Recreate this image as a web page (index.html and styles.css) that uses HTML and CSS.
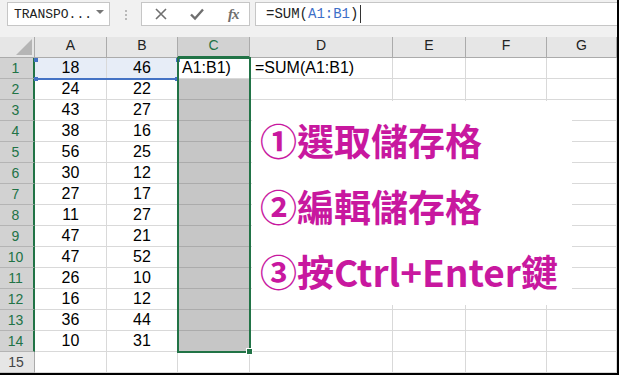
FILE: index.html
```html
<!DOCTYPE html>
<html lang="zh-Hant">
<head>
  <meta charset="UTF-8" />
  <title>Ctrl+Enter</title>
  <link rel="stylesheet" href="styles.css">
</head>
<body>
  <div class="app">
    <div class="fbar">
      <div class="namebox">
        <span class="name">TRANSPO...</span>
        <span class="drop"></span>
      </div>
      <div class="grip"><i></i><i></i><i></i></div>
      <div class="btns">
        <svg class="ico" width="14" height="14" viewBox="0 0 14 14"><path d="M2 2L12 12M12 2L2 12" stroke="#6f6f6f" stroke-width="1.6" fill="none"/></svg>
        <svg class="ico" width="16" height="14" viewBox="0 0 16 14"><path d="M2 7.5L6 11.5L14 2.5" stroke="#6f6f6f" stroke-width="2.4" fill="none"/></svg>
        <span class="fx">fx</span>
      </div>
      <div class="formula">=SUM(<span class="ref">A1:B1</span>)<span class="caret"></span></div>
    </div>

    <div class="sheet">
      <div class="row hdr">
        <div class="rh corner"><span class="tri"></span></div>
        <div class="ca">A</div>
        <div class="cb">B</div>
        <div class="cc on">C</div>
        <div class="cd">D</div>
        <div class="ce">E</div>
        <div class="cf">F</div>
        <div class="cg">G</div>
      </div>
      <div class="row">
        <div class="rh on">1</div>
        <div class="ca num refcell">18</div>
        <div class="cb num refcell">46</div>
        <div class="cc act">A1:B1)</div>
        <div class="cd txt">=SUM(A1:B1)</div>
        <div class="ce"></div><div class="cf"></div><div class="cg"></div>
      </div>
      <div class="row">
        <div class="rh on">2</div><div class="ca num">24</div><div class="cb num">22</div>
        <div class="cc shade"></div><div class="cd"></div><div class="ce"></div><div class="cf"></div><div class="cg"></div>
      </div>
      <div class="row">
        <div class="rh on">3</div><div class="ca num">43</div><div class="cb num">27</div>
        <div class="cc shade"></div><div class="cd"></div><div class="ce"></div><div class="cf"></div><div class="cg"></div>
      </div>
      <div class="row">
        <div class="rh on">4</div><div class="ca num">38</div><div class="cb num">16</div>
        <div class="cc shade"></div><div class="cd"></div><div class="ce"></div><div class="cf"></div><div class="cg"></div>
      </div>
      <div class="row">
        <div class="rh on">5</div><div class="ca num">56</div><div class="cb num">25</div>
        <div class="cc shade"></div><div class="cd"></div><div class="ce"></div><div class="cf"></div><div class="cg"></div>
      </div>
      <div class="row">
        <div class="rh on">6</div><div class="ca num">30</div><div class="cb num">12</div>
        <div class="cc shade"></div><div class="cd"></div><div class="ce"></div><div class="cf"></div><div class="cg"></div>
      </div>
      <div class="row">
        <div class="rh on">7</div><div class="ca num">27</div><div class="cb num">17</div>
        <div class="cc shade"></div><div class="cd"></div><div class="ce"></div><div class="cf"></div><div class="cg"></div>
      </div>
      <div class="row">
        <div class="rh on">8</div><div class="ca num">11</div><div class="cb num">27</div>
        <div class="cc shade"></div><div class="cd"></div><div class="ce"></div><div class="cf"></div><div class="cg"></div>
      </div>
      <div class="row">
        <div class="rh on">9</div><div class="ca num">47</div><div class="cb num">21</div>
        <div class="cc shade"></div><div class="cd"></div><div class="ce"></div><div class="cf"></div><div class="cg"></div>
      </div>
      <div class="row">
        <div class="rh on">10</div><div class="ca num">47</div><div class="cb num">52</div>
        <div class="cc shade"></div><div class="cd"></div><div class="ce"></div><div class="cf"></div><div class="cg"></div>
      </div>
      <div class="row">
        <div class="rh on">11</div><div class="ca num">26</div><div class="cb num">10</div>
        <div class="cc shade"></div><div class="cd"></div><div class="ce"></div><div class="cf"></div><div class="cg"></div>
      </div>
      <div class="row">
        <div class="rh on">12</div><div class="ca num">16</div><div class="cb num">12</div>
        <div class="cc shade"></div><div class="cd"></div><div class="ce"></div><div class="cf"></div><div class="cg"></div>
      </div>
      <div class="row">
        <div class="rh on">13</div><div class="ca num">36</div><div class="cb num">44</div>
        <div class="cc shade"></div><div class="cd"></div><div class="ce"></div><div class="cf"></div><div class="cg"></div>
      </div>
      <div class="row">
        <div class="rh on">14</div><div class="ca num">10</div><div class="cb num">31</div>
        <div class="cc shade"></div><div class="cd"></div><div class="ce"></div><div class="cf"></div><div class="cg"></div>
      </div>
      <div class="row">
        <div class="rh">15</div><div class="ca"></div><div class="cb"></div>
        <div class="cc"></div><div class="cd"></div><div class="ce"></div><div class="cf"></div><div class="cg"></div>
      </div>
    </div>

    <!-- overlays -->
    <div class="refline"></div>
    <span class="dot d1"></span>
    <span class="dot d2"></span>
    <span class="dot d3"></span>
    <span class="dot d4"></span>
    <div class="sel"></div>
    <div class="handle"></div>

    <div class="note">
      <p>①選取儲存格</p>
      <p>②編輯儲存格</p>
      <p>③按Ctrl+Enter鍵</p>
    </div>
  </div>
</body>
</html>
```

FILE: styles.css
```css
html, body, div, p {
  margin: 0;
  padding: 0;
}
body {
  background: #fff;
  font-family: "Liberation Sans", Arial, sans-serif;
}

.app {
  position: relative;
  width: 617px;
  height: 373px;
  border-right: 2px solid #000;
  border-bottom: 2px solid #000;
  overflow: hidden;
}

/* formula bar */
.fbar {
  height: 37px;
  background: #f1f1f1;
  display: flex;
  align-items: flex-start;
  padding-top: 2px;
  box-sizing: border-box;
}
.namebox {
  margin-left: 7px;
  width: 103px;
  height: 24px;
  box-sizing: border-box;
  border: 1px solid #c6c6c6;
  background: #fff;
  display: flex;
  align-items: center;
  padding-left: 6px;
  font-family: "Liberation Mono", monospace;
  font-size: 13px;
  color: #222;
}
.namebox .name {
  flex: 1;
}
.namebox .drop {
  width: 0;
  height: 0;
  border-left: 4px solid transparent;
  border-right: 4px solid transparent;
  border-top: 4px solid #777;
  margin-right: 5px;
  margin-top: -4px;
}
.grip {
  width: 31px;
  display: flex;
  flex-direction: column;
  align-items: center;
  gap: 2px;
  padding-top: 8px;
}
.grip i {
  display: block;
  width: 2px;
  height: 2px;
  background: #b9b9b9;
}
.btns {
  width: 109px;
  height: 24px;
  box-sizing: border-box;
  border: 1px solid #c6c6c6;
  background: #fff;
  display: flex;
  align-items: center;
  padding-left: 12px;
  gap: 21px;
}
.btns .fx {
  font-family: "Liberation Serif", serif;
  font-style: italic;
  font-weight: bold;
  font-size: 15px;
  color: #6f6f6f;
  margin-left: 2px;
  letter-spacing: -1px;
}
.formula {
  margin-left: 5px;
  flex: 1;
  height: 24px;
  box-sizing: border-box;
  border: 1px solid #c6c6c6;
  border-right: 0;
  background: #fff;
  padding-left: 10px;
  font-family: "Liberation Mono", monospace;
  font-size: 14px;
  line-height: 22px;
  color: #222;
  display: flex;
}
.formula .ref {
  color: #3c6fc8;
}
.formula .caret {
  width: 1px;
  height: 18px;
  background: #333;
  margin-top: 2px;
  margin-left: 2px;
}

/* grid */
.sheet {
  display: flex;
  flex-direction: column;
}
.row {
  display: flex;
  height: 21px;
}
.row > div {
  box-sizing: border-box;
  height: 21px;
  border-right: 1px solid #d9d9d9;
  border-bottom: 1px solid #d9d9d9;
  font-size: 16px;
  line-height: 20px;
  color: #000;
  white-space: nowrap;
  overflow: hidden;
}
.rh { width: 35px; }
.ca { width: 72px; }
.cb { width: 71px; }
.cc { width: 72px; }
.cd { width: 143px; }
.ce { width: 73px; }
.cf { width: 81px; }
.cg { flex: 1; }

.row > .rh {
  background: #e6e6e6;
  border-right: 1px solid #ababab;
  border-bottom: 1px solid #c4c4c4;
  text-align: center;
  font-size: 14px;
  color: #444;
  padding-right: 2px;
}
.row > .rh.on {
  background: #d2d2d2;
  color: #217346;
  border-right: 2px solid #217346;
  border-bottom-color: #b4b4b4;
}

.hdr > div {
  background: #e6e6e6;
  border-right-color: #ababab;
  border-bottom-color: #ababab;
  text-align: center;
  font-size: 14px;
  line-height: 16px;
  color: #222;
}
.hdr > .cc.on {
  background: #d2d2d2;
  color: #217346;
  border-bottom: 2px solid #217346;
}
.hdr > .corner {
  position: relative;
  background: #e6e6e6;
  border-right: 1px solid #ababab;
  border-bottom: 1px solid #ababab;
}
.corner .tri {
  position: absolute;
  right: 2px;
  bottom: 2px;
  width: 0;
  height: 0;
  border-left: 16px solid transparent;
  border-bottom: 16px solid #b5b5b5;
}

.num {
  text-align: center;
}
.refcell {
  background: #e7edf7;
}
.act {
  padding-left: 4px;
}
.txt {
  padding-left: 5px;
  overflow: visible !important;
}
.row > .shade {
  background: #c6c6c6;
  border-bottom-color: #ababab;
}

/* overlays */
.refline {
  position: absolute;
  left: 35px;
  top: 78px;
  width: 143px;
  height: 2px;
  background: #4472c4;
}
.dot {
  position: absolute;
  width: 4px;
  height: 4px;
  background: #4472c4;
}
.d1 { left: 34px; top: 58px; }
.d2 { left: 176px; top: 58px; }
.d3 { left: 34px; top: 77px; }
.d4 { left: 175px; top: 77px; }

.sel {
  position: absolute;
  left: 177px;
  top: 57px;
  width: 74px;
  height: 296px;
  box-sizing: border-box;
  border: 2px solid #217346;
}
.handle {
  position: absolute;
  left: 246px;
  top: 348px;
  width: 5px;
  height: 5px;
  background: #217346;
  border: 1px solid #fff;
}

.note {
  position: absolute;
  left: 252px;
  top: 101px;
  width: 320px;
  height: 204px;
  background: #fff;
  box-sizing: border-box;
  padding: 7px 0 0 8px;
  font-family: "Noto Sans CJK TC", "Noto Sans", sans-serif;
  font-weight: bold;
  font-size: 37px;
  line-height: 65.5px;
  color: #c8189f;
  white-space: nowrap;
}
```
